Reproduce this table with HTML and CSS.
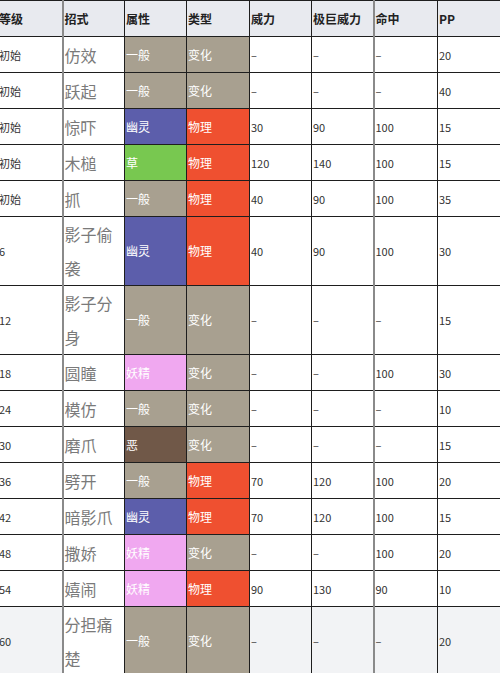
FILE: index.html
```html
<!DOCTYPE html>
<html lang="zh">
<head>
<meta charset="utf-8">
<link rel="stylesheet" href="styles.css">
<title>招式表</title>
</head>
<body>
<div class="wrap">
<table class="moves">
<colgroup>
<col class="c1"><col class="c2"><col class="c3"><col class="c4"><col class="c5"><col class="c6"><col class="c7"><col class="c8">
</colgroup>
<thead>
<tr><th>等级</th><th class="gl">招式</th><th>属性</th><th>类型</th><th>威力</th><th>极巨威力</th><th class="gl">命中</th><th>PP</th></tr>
</thead>
<tbody>
<tr><td>初始</td><td class="gl name">仿效</td><td class="t-normal">一般</td><td class="k-status">变化</td><td>–</td><td>–</td><td class="gl">–</td><td>20</td></tr>
<tr><td>初始</td><td class="gl name">跃起</td><td class="t-normal">一般</td><td class="k-status">变化</td><td>–</td><td>–</td><td class="gl">–</td><td>40</td></tr>
<tr><td>初始</td><td class="gl name">惊吓</td><td class="t-ghost">幽灵</td><td class="k-phys">物理</td><td>30</td><td>90</td><td class="gl">100</td><td>15</td></tr>
<tr><td>初始</td><td class="gl name">木槌</td><td class="t-grass">草</td><td class="k-phys">物理</td><td>120</td><td>140</td><td class="gl">100</td><td>15</td></tr>
<tr><td>初始</td><td class="gl name">抓</td><td class="t-normal">一般</td><td class="k-phys">物理</td><td>40</td><td>90</td><td class="gl">100</td><td>35</td></tr>
<tr class="tall"><td>6</td><td class="gl name">影子偷袭</td><td class="t-ghost">幽灵</td><td class="k-phys">物理</td><td>40</td><td>90</td><td class="gl">100</td><td>30</td></tr>
<tr class="tall"><td>12</td><td class="gl name">影子分身</td><td class="t-normal">一般</td><td class="k-status">变化</td><td>–</td><td>–</td><td class="gl">–</td><td>15</td></tr>
<tr><td>18</td><td class="gl name">圆瞳</td><td class="t-fairy">妖精</td><td class="k-status">变化</td><td>–</td><td>–</td><td class="gl">100</td><td>30</td></tr>
<tr><td>24</td><td class="gl name">模仿</td><td class="t-normal">一般</td><td class="k-status">变化</td><td>–</td><td>–</td><td class="gl">–</td><td>10</td></tr>
<tr><td>30</td><td class="gl name">磨爪</td><td class="t-dark">恶</td><td class="k-status">变化</td><td>–</td><td>–</td><td class="gl">–</td><td>15</td></tr>
<tr><td>36</td><td class="gl name">劈开</td><td class="t-normal">一般</td><td class="k-phys">物理</td><td>70</td><td>120</td><td class="gl">100</td><td>20</td></tr>
<tr><td>42</td><td class="gl name">暗影爪</td><td class="t-ghost">幽灵</td><td class="k-phys">物理</td><td>70</td><td>120</td><td class="gl">100</td><td>15</td></tr>
<tr><td>48</td><td class="gl name">撒娇</td><td class="t-fairy">妖精</td><td class="k-status">变化</td><td>–</td><td>–</td><td class="gl">100</td><td>20</td></tr>
<tr><td>54</td><td class="gl name">嬉闹</td><td class="t-fairy">妖精</td><td class="k-phys">物理</td><td>90</td><td>130</td><td class="gl">90</td><td>10</td></tr>
<tr class="tall hl"><td>60</td><td class="gl name">分担痛楚</td><td class="t-normal">一般</td><td class="k-status">变化</td><td>–</td><td>–</td><td class="gl">–</td><td>20</td></tr>
</tbody>
</table>
</div>
</body>
</html>
```
FILE: styles.css
```css
html, body {
  margin: 0;
  padding: 0;
  background: #fff;
}
.wrap {
  width: 500px;
  height: 673px;
  overflow: hidden;
}
.moves {
  margin-left: -3px;
  width: 506px;
  table-layout: fixed;
  border-collapse: collapse;
  font-family: "Liberation Sans", "Noto Sans CJK SC", sans-serif;
  font-size: 11px;
  color: #333;
}
.c1 { width: 65px; }
.c2 { width: 62px; }
.c3 { width: 62px; }
.c4 { width: 63px; }
.c5 { width: 62px; }
.c6 { width: 62px; }
.c7 { width: 64px; }
.c8 { width: 66px; }
.moves th, .moves td {
  border: 1px solid #1e1e1e;
  padding: 0 0 0 1px;
  text-align: left;
  vertical-align: middle;
  white-space: normal;
}
.moves th {
  height: 35px;
  background: #e8eaef;
  font-family: "Noto Sans CJK SC", "Liberation Sans", sans-serif;
  font-size: 12px;
  font-weight: bold;
  color: #222;
}
.moves tbody tr { height: 36px; }
.moves tbody tr.tall { height: 68px; }
.moves td {
  font-family: "Noto Sans CJK SC", "Liberation Sans", sans-serif;
  font-size: 11px;
  line-height: 14px;
}
.moves th.gl, .moves td.gl {
  border-left: 2px solid #8a8a8a;
}
.moves td.name {
  font-size: 16px;
  line-height: 34px;
  color: #7a7a7a;
  padding-left: 1px;
  background: #fff;
}
.t-normal, .k-status { background: #a8a090; color: #fff; }
.t-ghost { background: #5c5eab; color: #fff; }
.t-grass { background: #78c850; color: #fff; }
.t-fairy { background: #f0a8f0; color: #fff; }
.t-dark { background: #705848; color: #fff; }
.k-phys { background: #ef5030; color: #fff; }
.moves td.t-normal, .moves td.k-status, .moves td.t-ghost, .moves td.t-grass,
.moves td.t-fairy, .moves td.t-dark, .moves td.k-phys {
  font-size: 12px;
}
.hl td { background: #f2f3f5; }
.hl td.t-normal, .hl td.k-status { background: #a8a090; }
.hl td.name { background: #fff; }
```
